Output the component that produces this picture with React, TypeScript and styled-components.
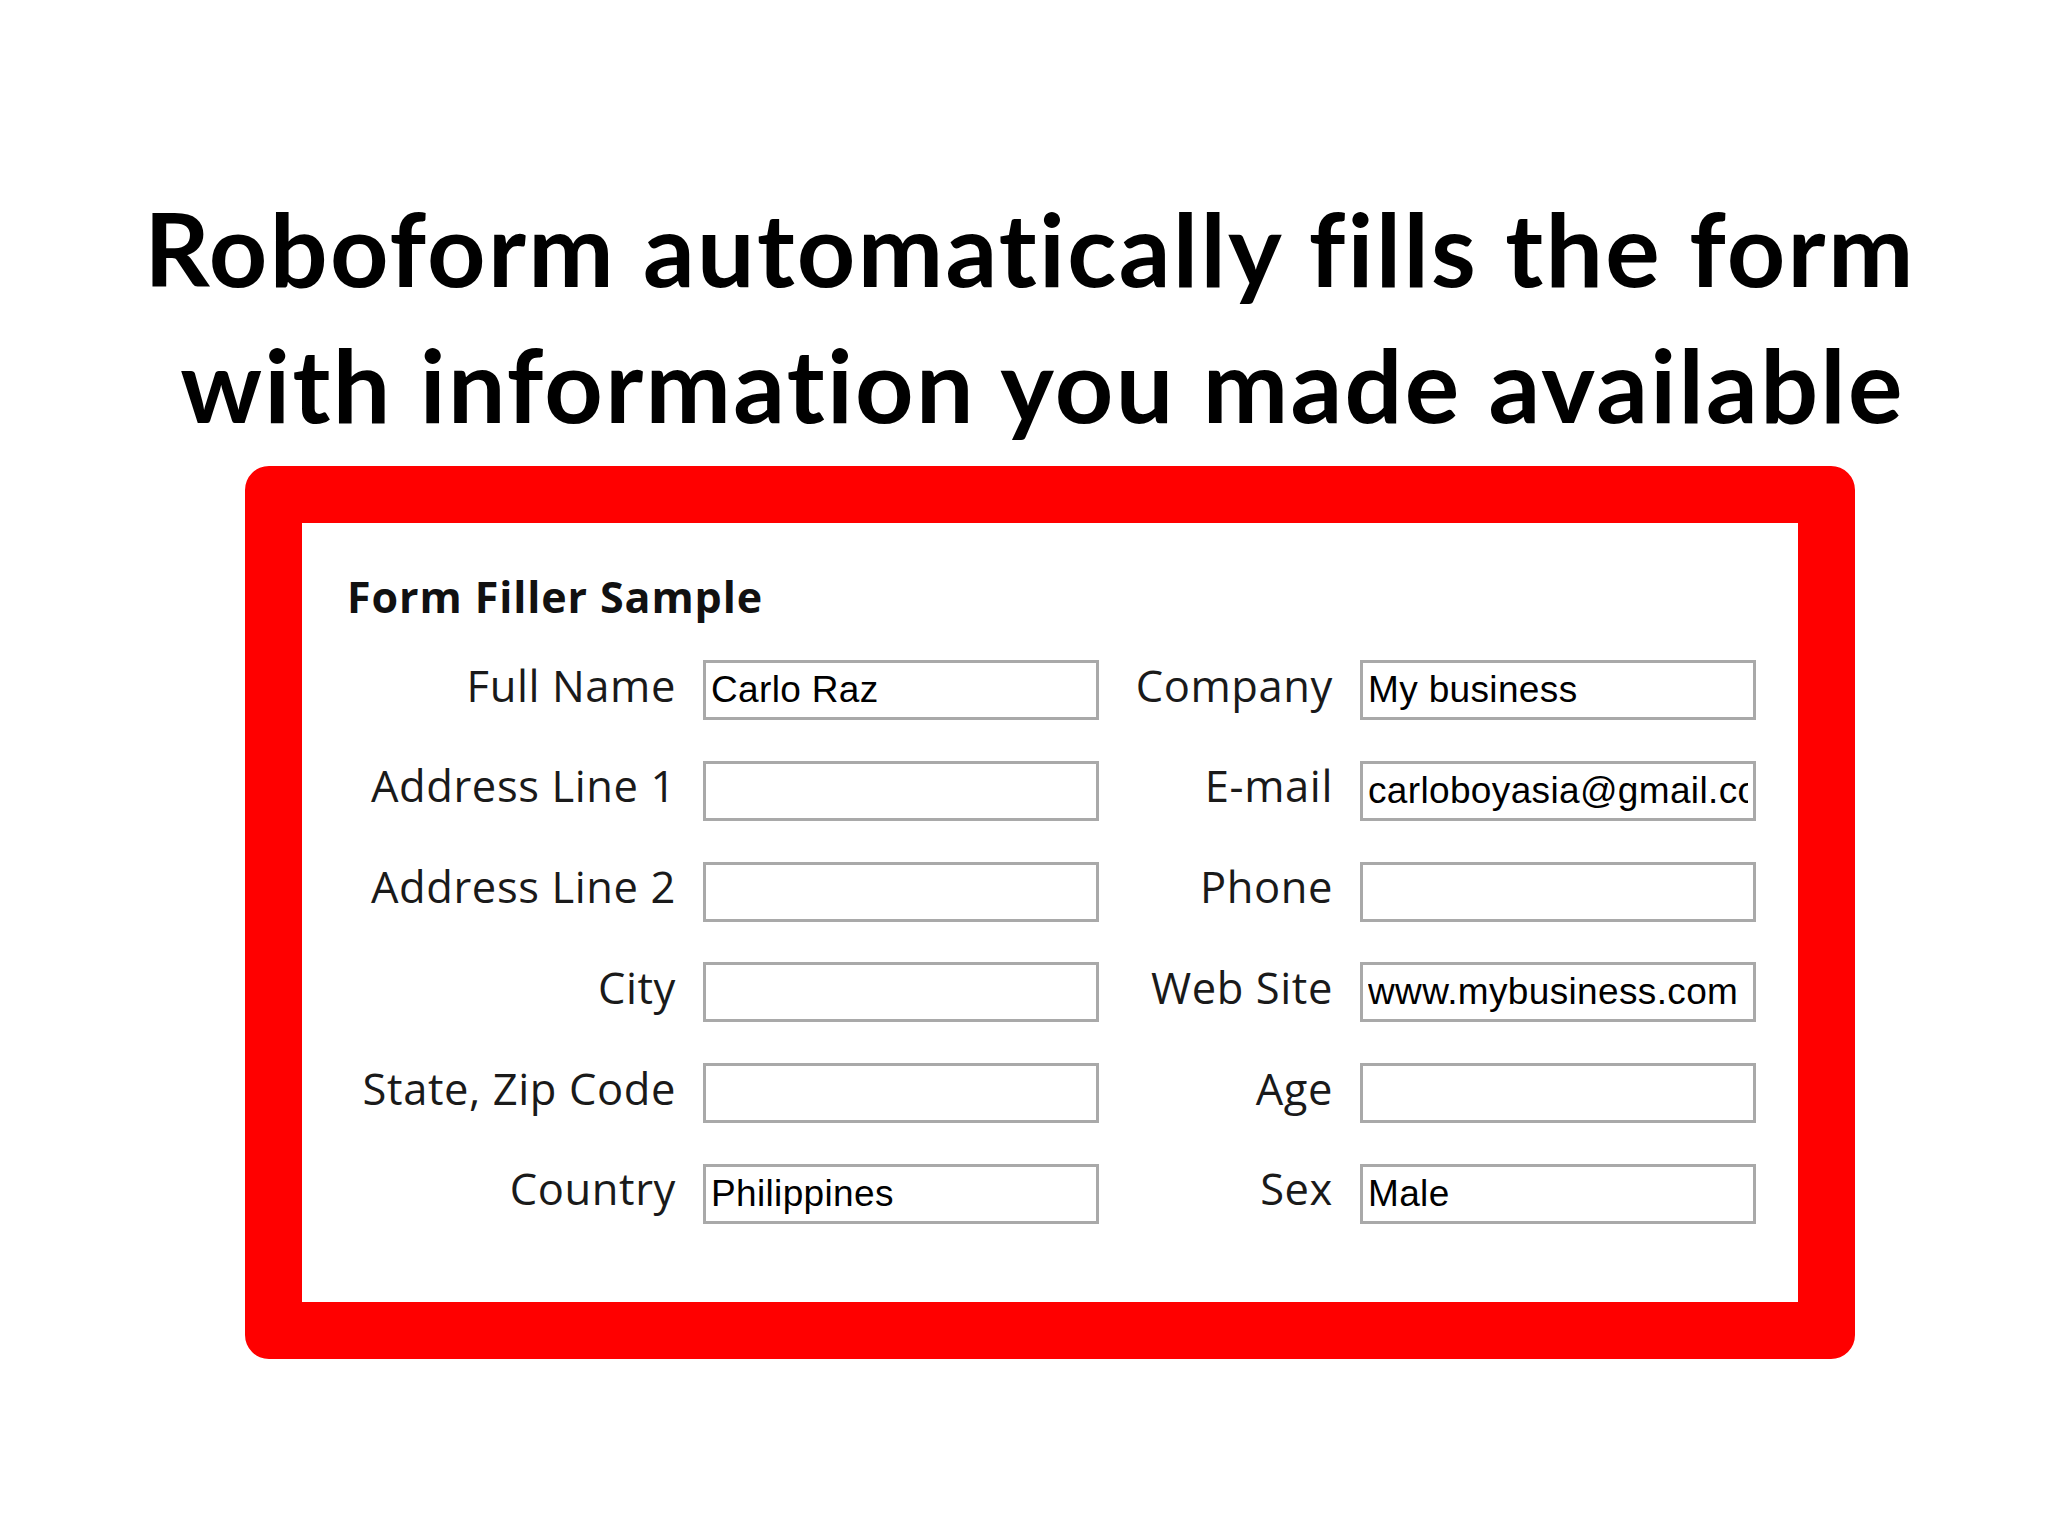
import React from "react";
import styled, { createGlobalStyle } from "styled-components";

const GlobalStyle = createGlobalStyle`
  html, body {
    margin: 0;
    padding: 0;
    background: #ffffff;
  }
`;

const Page = styled.div`
  width: 2048px;
  height: 1536px;
  padding-top: 180px;
  box-sizing: border-box;
  background: #ffffff;
  overflow: hidden;
`;

const Title = styled.h1`
  margin: 0 0 14px;
  padding-left: 12px;
  font-family: Lato, "Liberation Sans", sans-serif;
  font-weight: 700;
  font-size: 102px;
  line-height: 136px;
  letter-spacing: 2.3px;
  font-variant-ligatures: none;
  color: #000000;
  text-align: center;
  white-space: pre;
`;

const Frame = styled.section`
  margin-left: 245px;
  width: 1610px;
  height: 893px;
  box-sizing: border-box;
  border: 57px solid #ff0000;
  border-radius: 24px;
  background: #ffffff;
  padding: 49px 0 0 45px;
`;

const Heading = styled.h2`
  margin: 0 0 38px;
  font-family: "Open Sans", "Noto Sans", sans-serif;
  font-weight: 700;
  font-size: 43px;
  line-height: 50px;
  letter-spacing: 0.9px;
  color: #111111;
`;

const FieldGrid = styled.div`
  display: grid;
  grid-template-columns: 326px 396px 201px 396px;
  grid-auto-rows: 60px;
  column-gap: 30px;
  row-gap: 40.8px;
`;

const Label = styled.label`
  display: flex;
  align-items: center;
  justify-content: flex-end;
  margin-right: -3px;
  padding-bottom: 10px;
  font-family: "Open Sans", "Noto Sans", sans-serif;
  font-size: 43.5px;
  letter-spacing: 0.6px;
  color: #1a1a1a;
  white-space: nowrap;
`;

const TextBox = styled.input`
  width: 100%;
  height: 60px;
  box-sizing: border-box;
  margin: 0;
  padding: 0 5px;
  border: 3px solid #a9a9a9;
  border-radius: 0;
  background: #ffffff;
  outline: none;
  font-family: "Liberation Sans", Arial, sans-serif;
  font-size: 37px;
  letter-spacing: 0.35px;
  color: #000000;
`;

interface FieldProps {
  label: string;
  value?: string;
}

const Field = ({ label, value = "" }: FieldProps) => (
  <>
    <Label>{label}</Label>
    <TextBox type="text" readOnly value={value} />
  </>
);

const rows: [FieldProps, FieldProps][] = [
  [{ label: "Full Name", value: "Carlo Raz" }, { label: "Company", value: "My business" }],
  [{ label: "Address Line 1" }, { label: "E-mail", value: "carloboyasia@gmail.com" }],
  [{ label: "Address Line 2" }, { label: "Phone" }],
  [{ label: "City" }, { label: "Web Site", value: "www.mybusiness.com" }],
  [{ label: "State, Zip Code" }, { label: "Age" }],
  [{ label: "Country", value: "Philippines" }, { label: "Sex", value: "Male" }],
];

const App = () => (
  <Page>
    <GlobalStyle />
    <Title>
      {"Roboform automatically fills the form\n with information you made available"}
    </Title>
    <Frame>
      <Heading>Form Filler Sample</Heading>
      <FieldGrid>
        {rows.map(([left, right]) => (
          <React.Fragment key={left.label}>
            <Field {...left} />
            <Field {...right} />
          </React.Fragment>
        ))}
      </FieldGrid>
    </Frame>
  </Page>
);

export default App;
